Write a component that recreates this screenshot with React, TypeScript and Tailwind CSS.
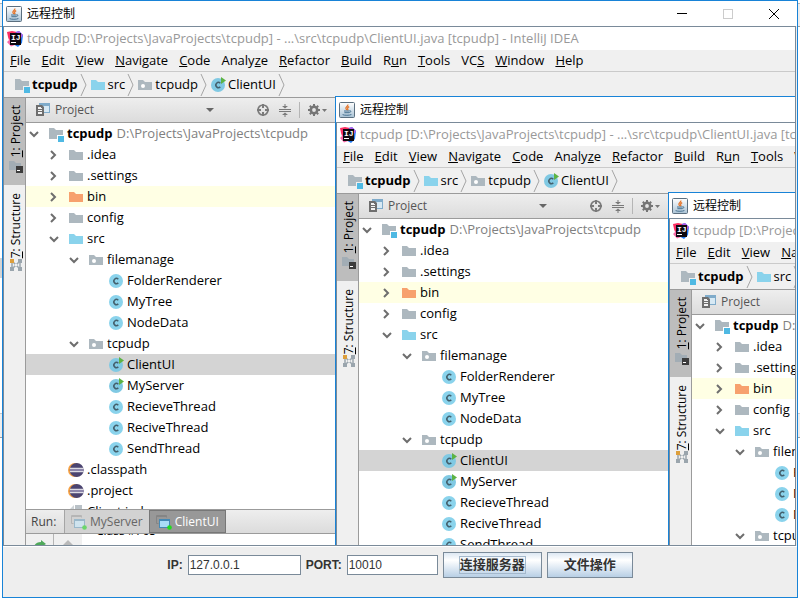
import React from 'react';

type IconProps = { className?: string };

const JavaIcon: React.FC = () => (
    <svg className="size-4 shrink-0" viewBox="0 0 16 16" aria-hidden="true">
        <defs>
            <linearGradient id="java-plate" x1="0" y1="0" x2="0" y2="1">
                <stop offset="0" stopColor="#ffffff" />
                <stop offset="1" stopColor="#a9c3d6" />
            </linearGradient>
        </defs>
        <rect x="0.5" y="0.5" width="15" height="15" rx="1" fill="url(#java-plate)" stroke="#5b6f7f" />
        <path d="M8.8 2.5c.6 1.600-2.200 2.200-1.900 3.900.1.7.7 1 .9 1.600M10.200 4.600c-1.200.6-2 1.300-1.400 2.400.3.5.2.9-.3 1.400" fill="none" stroke="#e5762c" strokeWidth="1.300" />
        <path d="M5 9h5.500M5.400 10.700h4.700M10.500 8.800c1.900-.4 1.800 1.400-.2 1.800M3.600 12.600c1.500.9 7 .9 8.800-.1" fill="none" stroke="#46708f" strokeWidth="1" />
    </svg>
);

const IdeaIcon: React.FC = () => (
    <svg className="size-4 shrink-0" viewBox="0 0 16 16" aria-hidden="true">
        <path d="M0 1 5 0 10 1 8 8 2 9 1 6z" fill="#fb2f63" />
        <path d="M0 11 3 8v5l5 1-4 1.500z" fill="#f66aa8" />
        <path d="M9 1 12 0l4 4-1 8-4 4-5-3z" fill="#1d79f3" />
        <path d="M9 1 12 0l4 4-2 3z" fill="#b65be6" />
        <rect x="3" y="2" width="11" height="12" fill="#0d0810" />
        <text x="4" y="9" className="fill-white font-['Liberation_Mono'] text-[8px] font-bold">IJ</text>
        <rect x="4" y="11" width="5" height="1" fill="#ffffff" />
    </svg>
);

const folderShape = 'M1 3h5l2 2h7v8H1z';

const FolderIcon: React.FC<IconProps> = ({ className = 'fill-[#adb8bf]' }) => (
    <svg className="size-4 shrink-0" viewBox="0 0 16 16" aria-hidden="true">
        <path d={folderShape} className={className} />
    </svg>
);

const PackageIcon: React.FC = () => (
    <svg className="size-4 shrink-0" viewBox="0 0 16 16" aria-hidden="true">
        <path d={folderShape} fill="#adb8bf" />
        <circle cx="6" cy="9" r="2" fill="#ffffff" />
    </svg>
);

const ModuleIcon: React.FC = () => (
    <svg className="size-4 shrink-0" viewBox="0 0 16 16" aria-hidden="true">
        <path d="M1 2h5l2 2h7v5H9v4H1z" fill="#adb8bf" />
        <rect x="10" y="10" width="6" height="6" fill="#4fb9e3" />
    </svg>
);

const ClassIcon: React.FC<{ runnable?: boolean }> = ({ runnable }) => (
    <svg className="size-4 shrink-0" viewBox="0 0 16 16" aria-hidden="true">
        <circle cx="8" cy="8" r="7" fill={runnable ? '#80c9e3' : '#8ad3ec'} />
        <path d="M10.300 6.200A2.600 2.600 0 1 0 10.300 9.900" fill="none" stroke="#44606d" strokeWidth="1.500" />
        {runnable && <path d="M11 0v7l5-3.500z" fill="#5db344" />}
    </svg>
);

const EclipseIcon: React.FC = () => (
    <svg className="size-4 shrink-0" viewBox="0 0 16 16" aria-hidden="true">
        <circle cx="7" cy="8" r="7" fill="#f5a043" />
        <circle cx="8.700" cy="8" r="7" fill="#4b4470" />
        <path d="M2 6.300h13.400M2 9.700h13.400" stroke="#ffffff" strokeWidth="1" />
        <path d="M2 8h13.400" stroke="#8c86ab" strokeWidth="2" />
    </svg>
);

const FileIcon: React.FC = () => (
    <svg className="size-4 shrink-0" viewBox="0 0 16 16" aria-hidden="true">
        <path d="M7 1h7v14H2V6h5z" fill="#b9c1c7" />
        <path d="M6 1v4H2z" fill="#cdd3d7" />
    </svg>
);

const ProjectViewIcon: React.FC = () => (
    <svg className="size-4 shrink-0" viewBox="0 0 16 16" aria-hidden="true">
        <path d="M5 2h10v8H9" fill="#d7e9f4" />
        <path d="M4 1h11v10H9v-1h5V4H4z" fill="#7fabca" />
        <path d="M1 3h6l2 2v9H1z" fill="#6e6e6e" />
        <path d="M3 5h3v1h1v6H3z" fill="#f2f2f2" />
        <path d="M3 7h4v1H3zM3 9h4v1H3z" fill="#6e6e6e" />
    </svg>
);

const TargetIcon: React.FC = () => (
    <svg className="size-4 shrink-0" viewBox="0 0 16 16" fill="none" stroke="#7a7a7a" aria-hidden="true">
        <circle cx="8" cy="8" r="5" strokeWidth="1.700" />
        <path d="M8 2v4M8 10v4M2 8h4M10 8h4" strokeWidth="2" />
    </svg>
);

const CollapseIcon: React.FC = () => (
    <svg className="size-4 shrink-0" viewBox="0 0 16 16" fill="#7a7a7a" aria-hidden="true">
        <path d="M2 7h12v1H2zM2 9h12v1H2zM7.500 2h1v2H11L8 6.500 5 4h2.500zM7.500 15h1v-2H11l-3-2.500L5 13h2.500z" />
    </svg>
);

const GearIcon: React.FC = () => (
    <svg className="size-4 shrink-0" viewBox="0 0 16 16" fill="none" stroke="#757575" aria-hidden="true">
        <circle cx="8" cy="8" r="3.200" strokeWidth="2.600" />
        <path d="M8 2v2M8 12v2M2 8h2M12 8h2M3.800 3.800l1.400 1.400M10.800 10.800l1.400 1.400M12.200 3.800l-1.400 1.400M5.200 10.800l-1.400 1.400" strokeWidth="2" />
    </svg>
);

const RunTabIcon: React.FC<{ active?: boolean }> = ({ active }) => (
    <svg className="size-4 shrink-0" viewBox="0 0 16 16" aria-hidden="true">
        <path d="M2.500 9.500h-2v-8h10v2" fill="none" stroke={active ? '#858585' : '#b5b5b5'} />
        <path d="M1 2h9" stroke={active ? '#858585' : '#b5b5b5'} strokeWidth="2" />
        <rect x="3.500" y="5.500" width="10" height="8" fill={active ? '#a9dcf7' : '#cfe3ee'} stroke={active ? '#4489b5' : '#9ab8ca'} />
        <path d="M3 6h11" stroke={active ? '#4489b5' : '#9ab8ca'} strokeWidth="2" />
        <circle cx="13.500" cy="13.500" r="2.300" fill={active ? '#1fdd1f' : '#6bd66b'} />
    </svg>
);

const Chevron: React.FC<{ open?: boolean }> = ({ open }) => (
    <svg className="size-4 shrink-0" viewBox="0 0 16 16" fill="none" stroke="#6e6e6e" strokeWidth="2" aria-hidden="true">
        <path d={open ? 'M4 6l4 4 4-4' : 'M5 4l4 4-4 4'} />
    </svg>
);

const CrumbArrow: React.FC = () => (
    <svg className="h-6 w-2 shrink-0" viewBox="0 0 8 24" fill="none" stroke="#a5a5a5" aria-hidden="true">
        <path d="M1 1l5 11-5 11" />
    </svg>
);

const menus = [
    ['', 'F', 'ile'],
    ['', 'E', 'dit'],
    ['', 'V', 'iew'],
    ['', 'N', 'avigate'],
    ['', 'C', 'ode'],
    ['Analy', 'z', 'e'],
    ['', 'R', 'efactor'],
    ['', 'B', 'uild'],
    ['R', 'u', 'n'],
    ['', 'T', 'ools'],
    ['VC', 'S', ''],
    ['', 'W', 'indow'],
    ['', 'H', 'elp'],
];

type Row = {
    name: string;
    indent: string;
    icon: React.ReactNode;
    open?: boolean;
    row?: string;
    path?: string;
};

const rows: Row[] = [
    { name: 'tcpudp', indent: 'pl-0', icon: <ModuleIcon />, open: true, path: 'D:\\Projects\\JavaProjects\\tcpudp' },
    { name: '.idea', indent: 'pl-5', icon: <FolderIcon />, open: false },
    { name: '.settings', indent: 'pl-5', icon: <FolderIcon />, open: false },
    { name: 'bin', indent: 'pl-5', icon: <FolderIcon className="fill-[#f7a16e]" />, open: false, row: 'bg-[#ffffe4]' },
    { name: 'config', indent: 'pl-5', icon: <FolderIcon />, open: false },
    { name: 'src', indent: 'pl-5', icon: <FolderIcon className="fill-[#8ad3ec]" />, open: true },
    { name: 'filemanage', indent: 'pl-10', icon: <PackageIcon />, open: true },
    { name: 'FolderRenderer', indent: 'pl-15', icon: <ClassIcon /> },
    { name: 'MyTree', indent: 'pl-15', icon: <ClassIcon /> },
    { name: 'NodeData', indent: 'pl-15', icon: <ClassIcon /> },
    { name: 'tcpudp', indent: 'pl-10', icon: <PackageIcon />, open: true },
    { name: 'ClientUI', indent: 'pl-15', icon: <ClassIcon runnable />, row: 'bg-[#d4d4d4]' },
    { name: 'MyServer', indent: 'pl-15', icon: <ClassIcon runnable /> },
    { name: 'RecieveThread', indent: 'pl-15', icon: <ClassIcon /> },
    { name: 'ReciveThread', indent: 'pl-15', icon: <ClassIcon /> },
    { name: 'SendThread', indent: 'pl-15', icon: <ClassIcon /> },
    { name: '.classpath', indent: 'pl-5', icon: <EclipseIcon /> },
    { name: '.project', indent: 'pl-5', icon: <EclipseIcon /> },
    { name: 'Client.iml', indent: 'pl-5', icon: <FileIcon /> },
];

const ProjectTree: React.FC = () => (
    <ul>
        {rows.map((item, i) => (
            <li key={i} className={`flex h-[21px] items-center ${item.row ?? ''}`}>
                <div className={`flex items-center whitespace-nowrap ${item.indent}`}>
                    {item.open === undefined ? <span className="w-4" /> : <Chevron open={item.open} />}
                    <span className="ml-[6px] flex items-center gap-[3px]">
                        {item.icon}
                        <span className={item.path ? 'font-bold' : ''}>{item.name}</span>
                    </span>
                    {item.path && <span className="ml-1 text-[#808080]">{item.path}</span>}
                </div>
            </li>
        ))}
    </ul>
);

const TitleBar: React.FC<{ controls?: boolean }> = ({ controls }) => (
    <header className="flex h-[25px] shrink-0 items-center bg-white pl-[3px] text-[12px]">
        <JavaIcon />
        <h1 className="ml-[5px] flex-1">远程控制</h1>
        {controls && (
            <div className="flex">
                <button aria-label="Minimize" className="flex h-6 w-[46px] items-center justify-center">
                    <span className="h-px w-[10px] bg-black" />
                </button>
                <button aria-label="Maximize" className="flex h-6 w-[46px] items-center justify-center">
                    <span className="size-[10px] border border-[#cccccc]" />
                </button>
                <button aria-label="Close" className="flex h-6 w-[46px] items-center justify-center">
                    <svg className="size-[10px]" viewBox="0 0 10 10" stroke="#000000" aria-hidden="true">
                        <path d="M0 0l10 10M10 0L0 10" />
                    </svg>
                </button>
            </div>
        )}
    </header>
);

const SideStripe: React.FC = () => (
    <aside className="flex w-[22px] shrink-0 flex-col border-r border-[#9b9b9b] bg-[#f0f0f0] text-[12px]">
        <button className="flex h-[87px] flex-col items-center justify-end gap-1 bg-[#bdbdbd] pb-3 pl-[3px]">
            <span className="rotate-180 [writing-mode:vertical-rl]">
                <u>1</u>: Project
            </span>
            <svg className="h-3 w-4" viewBox="0 0 16 12" aria-hidden="true">
                <path d="M1 0h5l2 2h5v7H1z" fill="#a2adb5" />
                <rect x="8" y="5" width="7" height="7" fill="#3c3c3c" />
                <path d="M9 9.500h3" stroke="#ffffff" />
            </svg>
        </button>
        <button className="flex flex-col items-center gap-px pt-2 pl-[3px]">
            <span className="rotate-180 [writing-mode:vertical-rl]">
                <u>7</u>: Structure
            </span>
            <svg className="size-3" viewBox="0 0 12 12" aria-hidden="true">
                <path d="M2 2l8 8M10 2l-8 8M2 4v4M10 4v4" stroke="#9aa5ad" strokeWidth="1.500" />
                <path d="M8 0h4v4H8zM0 8h4v4H0zM8 8h4v4H8z" fill="#9aa5ad" />
                <rect width="4" height="4" fill="#dd9f3c" />
                <rect x="5" y="5" width="2" height="2" fill="#f0f0f0" />
            </svg>
        </button>
    </aside>
);

const RunPanel: React.FC = () => (
    <div className="shrink-0 text-[12px]">
        <div className="flex h-[25px] items-stretch border-y border-[#9b9b9b] bg-linear-to-b from-[#eeeeee] to-[#dcdcdc] text-[#444444]">
            <span className="flex w-[38px] items-center pl-[5px]">Run:</span>
            <button className="flex items-center gap-[3px] border-l border-[#a5a5a5] bg-[#d2d2d2] px-[6px] text-[#666666]">
                <RunTabIcon />
                MyServer
            </button>
            <button className="flex items-center gap-[3px] border border-[#777777] bg-[#989898] px-[6px] text-white">
                <RunTabIcon active />
                ClientUI
            </button>
        </div>
        <div className="flex h-[11px] overflow-hidden">
            <span className="flex w-7 justify-center border-r border-[#b5b5b5] bg-[#f0f0f0] pt-[6px]">
                <svg className="h-3 w-4" viewBox="0 0 16 12" aria-hidden="true">
                    <path d="M2 8c0-4 3-6 7-6V0l5 4-5 3V5C6 5 5 6 5 8z" fill="#4fa85b" />
                </svg>
            </span>
            <span className="flex w-7 justify-center bg-[#f0f0f0] pt-[6px]">
                <svg className="h-3 w-4" viewBox="0 0 16 12" aria-hidden="true">
                    <path d="M8 0l6 6H2z" fill="#b9b9b9" />
                </svg>
            </span>
            <span className="-mt-3 ml-[14px]">Class #765</span>
        </div>
    </div>
);

const Ide: React.FC<{ depth: number }> = ({ depth }) => (
    <div className="flex min-h-0 min-w-0 flex-1 flex-col bg-white text-[13px]">
        <div className="flex h-[23px] shrink-0 items-center gap-1 pl-[3px] whitespace-nowrap text-[#999999]">
            <IdeaIcon />
            tcpudp [D:\Projects\JavaProjects\tcpudp] - ...\src\tcpudp\ClientUI.java [tcpudp] - IntelliJ IDEA
        </div>
        <nav className="flex h-[22px] shrink-0 items-center gap-[11px] border-b border-[#cacaca] bg-[#f0f0f0] pl-[6px]">
            {menus.map(([before, key, after]) => (
                <button key={before + key + after}>
                    {before}
                    <u>{key}</u>
                    {after}
                </button>
            ))}
        </nav>
        <div className="flex h-[25px] shrink-0 items-center gap-[2px] bg-[#f0f0f0] pl-[10px]">
            <ModuleIcon />
            <b>tcpudp</b>
            <CrumbArrow />
            <FolderIcon className="fill-[#8ad3ec]" />
            src
            <CrumbArrow />
            <PackageIcon />
            tcpudp
            <CrumbArrow />
            <ClassIcon runnable />
            ClientUI
            <CrumbArrow />
        </div>
        <div className="flex min-h-0 flex-1 border-t border-[#9b9b9b]">
            <SideStripe />
            <div className="flex min-h-0 min-w-0 flex-1 flex-col">
                <div className="flex h-[25px] shrink-0 items-center border-b border-[#9b9b9b] bg-linear-to-b from-[#eeeeee] to-[#dcdcdc] text-[12px] text-[#555555]">
                    <div className="flex w-[309px] shrink-0 items-center pl-[9px]">
                        <ProjectViewIcon />
                        <span className="ml-1 flex-1">Project</span>
                        <svg className="mr-[41px] h-1 w-2" viewBox="0 0 8 4" aria-hidden="true">
                            <path d="M0 0h8L4 4z" fill="#666666" />
                        </svg>
                        <TargetIcon />
                        <span className="w-[6px]" />
                        <CollapseIcon />
                        <span className="mx-[6px] h-4 w-px bg-[#b5b5b5]" />
                        <GearIcon />
                        <svg className="mr-2 h-[3px] w-[5px]" viewBox="0 0 5 3" aria-hidden="true">
                            <path d="M0 0h5L2.500 3z" fill="#777777" />
                        </svg>
                    </div>
                </div>
                <div className={depth === 0 ? 'min-h-0 flex-1 overflow-hidden' : ''}>
                    <ProjectTree />
                </div>
                {depth === 0 && <RunPanel />}
            </div>
        </div>
    </div>
);

// The remote screen shows the same client again, one level smaller
const RemoteScreen: React.FC<{ depth: number }> = ({ depth }) => (
    <div className={`relative flex min-h-0 flex-1 overflow-hidden border-t border-l border-[#7a8a99] ${depth === 0 ? 'mr-px border-r border-b' : ''}`}>
        <Ide depth={depth} />
        {depth < 2 && (
            <div className="absolute top-[69px] right-0 left-[331px] flex flex-col overflow-hidden border-t border-l border-[#1883d7] bg-white">
                <TitleBar />
                <RemoteScreen depth={depth + 1} />
            </div>
        )}
    </div>
);

// Sliver of the window behind, seen on both sides of the client
const BackgroundEdge: React.FC<{ lower: string }> = ({ lower }) => (
    <div className="flex w-[2px] shrink-0 flex-col bg-white">
        <div className="h-1 border-b border-[#b5b5b5]" />
        <div className="h-[23px] border-b border-[#9b9b9b] bg-[#eeeeee]" />
        <div className="h-[231px]" />
        <div className={`h-5 ${lower}`} />
        <div className="h-[136px] border-b border-[#c8c8c8]" />
        <div className="h-6 border-b border-[#9b9b9b] bg-[#eeeeee]" />
    </div>
);

export default function App() {
    return (
        <div className="flex h-screen overflow-hidden bg-white font-['Open_Sans','Noto_Sans_CJK_SC',sans-serif] text-black">
            <BackgroundEdge lower="bg-[#d4d4d4]" />
            <main className="mb-[2px] flex min-w-0 flex-1 flex-col border border-[#1883d7] bg-[#eeeeee]">
                <TitleBar controls />
                <RemoteScreen depth={0} />
                <form
                    className="flex h-[51px] shrink-0 items-start justify-center gap-[5px] border-t border-white pt-[5px] font-['Liberation_Sans','Noto_Sans_CJK_SC',sans-serif] text-[12px] text-[#333333]"
                    onSubmit={(e) => e.preventDefault()}
                >
                    <label htmlFor="ip" className="leading-[26px] font-bold">IP:</label>
                    <input id="ip" defaultValue="127.0.0.1" className="mt-[3px] h-5 w-[113px] border border-[#7a8a99] bg-white px-px" />
                    <label htmlFor="port" className="leading-[26px] font-bold">PORT:</label>
                    <input id="port" defaultValue="10010" className="mt-[3px] h-5 w-[91px] border border-[#7a8a99] bg-white px-px" />
                    <button type="button" className="flex h-[26px] items-center border border-[#7a8a99] bg-linear-to-b from-[#dde8f3] via-white via-30% to-[#b8cfe5] px-[15px] text-[13px] font-bold">
                        <span className="border border-[#a3b8cc] leading-4">连接服务器</span>
                    </button>
                    <button type="button" className="flex h-[26px] items-center border border-[#7a8a99] bg-linear-to-b from-[#dde8f3] via-white via-30% to-[#b8cfe5] px-4 text-[13px] font-bold">
                        <span className="leading-4">文件操作</span>
                    </button>
                </form>
            </main>
            <BackgroundEdge lower="bg-white" />
        </div>
    );
}
